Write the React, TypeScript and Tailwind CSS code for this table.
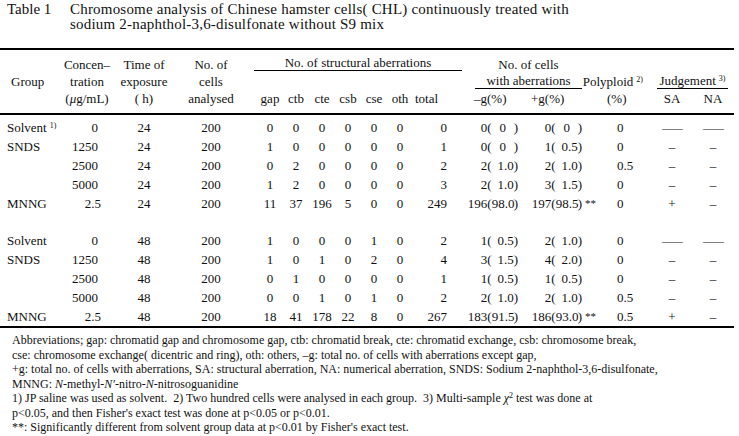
import React from "react";

// shared column template for header and body rows
const COLS =
  "grid grid-cols-[64px_46px_68px_66px_13px_26px_26px_26px_26px_26px_26px_40px_10px_68px_75px_45px_42px_40px]";

interface RowData {
  group?: string;
  sup?: string;
  conc: string;
  concPr?: string;
  time: string;
  cells: string;
  s: (number | string)[];
  neg: [string, string];
  pos: [string, string];
  mark?: string;
  poly: string;
  sa: string;
  na: string;
}

const rows24: RowData[] = [
  { group: "Solvent", sup: "1)", conc: "0", time: "24", cells: "200", s: [0, 0, 0, 0, 0, 0, 0], neg: ["0", "0"], pos: ["0", "0"], poly: "0", sa: "—", na: "—" },
  { group: "SNDS", conc: "1250", time: "24", cells: "200", s: [1, 0, 0, 0, 0, 0, 1], neg: ["0", "0"], pos: ["1", "0.5"], poly: "0", sa: "–", na: "–" },
  { conc: "2500", time: "24", cells: "200", s: [0, 2, 0, 0, 0, 0, 2], neg: ["2", "1.0"], pos: ["2", "1.0"], poly: "0.5", sa: "–", na: "–" },
  { conc: "5000", time: "24", cells: "200", s: [1, 2, 0, 0, 0, 0, 3], neg: ["2", "1.0"], pos: ["3", "1.5"], poly: "0", sa: "–", na: "–" },
  { group: "MNNG", conc: "2.5", concPr: "pr-[9px]", time: "24", cells: "200", s: [11, 37, 196, 5, 0, 0, 249], neg: ["196", "98.0"], pos: ["197", "98.5"], mark: "**", poly: "0", sa: "+", na: "–" },
];

const rows48: RowData[] = [
  { group: "Solvent", conc: "0", time: "48", cells: "200", s: [1, 0, 0, 0, 1, 0, 2], neg: ["1", "0.5"], pos: ["2", "1.0"], poly: "0", sa: "—", na: "—" },
  { group: "SNDS", conc: "1250", time: "48", cells: "200", s: [1, 0, 1, 0, 2, 0, 4], neg: ["3", "1.5"], pos: ["4", "2.0"], poly: "0", sa: "–", na: "–" },
  { conc: "2500", time: "48", cells: "200", s: [0, 1, 0, 0, 0, 0, 1], neg: ["1", "0.5"], pos: ["1", "0.5"], poly: "0", sa: "–", na: "–" },
  { conc: "5000", time: "48", cells: "200", s: [0, 0, 1, 0, 1, 0, 2], neg: ["2", "1.0"], pos: ["2", "1.0"], poly: "0.5", sa: "–", na: "–" },
  { group: "MNNG", conc: "2.5", concPr: "pr-[9px]", time: "48", cells: "200", s: [18, 41, 178, 22, 8, 0, 267], neg: ["183", "91.5"], pos: ["186", "93.0"], mark: "**", poly: "0.5", sa: "+", na: "–" },
];

const Pct = ({ n, p }: { n: string; p: string }) => (
  <span className="whitespace-nowrap">
    {n}(
    <span className={`inline-block w-[22px] ${p === "0" ? "text-center" : "text-right"}`}>{p}</span>)
  </span>
);

const Dash = ({ v }: { v: string }) =>
  v === "—" ? <span className="inline-block scale-x-[1.6]">—</span> : <span>{v}</span>;

const Row = ({ r }: { r: RowData }) => (
  <div className={`${COLS} h-[19px] leading-[19px]`}>
    <div className="pl-[7px] whitespace-nowrap">
      {r.group}
      {r.sup && <sup className="ml-[3px] text-[8px]">{r.sup}</sup>}
    </div>
    <div className={`text-right ${r.concPr ?? "pr-[12px]"}`}>{r.conc}</div>
    <div className="text-center">{r.time}</div>
    <div className="text-center">{r.cells}</div>
    <div />
    {r.s.slice(0, 6).map((v, i) => (
      <div key={i} className="text-center">
        {v}
      </div>
    ))}
    <div className="text-right pr-[6px]">{r.s[6]}</div>
    <div />
    <div className="text-right pr-[13px]">
      <Pct n={r.neg[0]} p={r.neg[1]} />
    </div>
    <div className="flex justify-end pr-[6px]">
      <Pct n={r.pos[0]} p={r.pos[1]} />
      <span className="w-[18px] pl-[3px] text-[11px]">{r.mark}</span>
    </div>
    <div className="pl-[11px]">{r.poly}</div>
    <div className="text-center">
      <Dash v={r.sa} />
    </div>
    <div className="text-center">
      <Dash v={r.na} />
    </div>
  </div>
);

const C = ({ className, children }: { className: string; children: React.ReactNode }) => (
  <div className={`flex justify-center whitespace-nowrap ${className}`}>
    <span>{children}</span>
  </div>
);

export default function App() {
  return (
    <div className="w-[739px] h-[436px] bg-white text-[#111] font-['Liberation_Serif',serif] overflow-hidden">
      {/* title */}
      <div className="flex pt-[2px] text-[15px] leading-[15px] tracking-[0.2px]">
        <div className="w-[70px] pl-[7px] shrink-0 tracking-normal">Table 1</div>
        <div>
          <div>Chromosome analysis of Chinese hamster cells( CHL) continuously treated with</div>
          <div>sodium 2-naphthol-3,6-disulfonate without S9 mix</div>
        </div>
      </div>

      <div className="w-[734px] mt-[16px] border-t-[2px] border-black text-[13px]">
        {/* header */}
        <div className={`${COLS} grid-rows-[17px_17px_17px] pt-[6px] pb-[6px] leading-[17px]`}>
          <C className="col-start-2 row-start-1">Concen–</C>
          <C className="col-start-3 row-start-1">Time of</C>
          <C className="col-start-4 row-start-1">No. of</C>
          <div className="col-start-5 col-span-9 row-start-1 self-start ml-[10px] mr-[1px] text-center leading-[14px] border-b border-black">
            No. of structural aberrations
          </div>
          <div className="col-start-14 col-span-2 row-start-1 ml-[12px] mr-[24px] text-center">No. of cells</div>

          <div className="col-start-1 row-start-2 pl-[11px]">Group</div>
          <C className="col-start-2 row-start-2">tration</C>
          <C className="col-start-3 row-start-2">exposure</C>
          <C className="col-start-4 row-start-2">cells</C>
          <div className="col-start-14 col-span-2 row-start-2 self-start mt-[1px] ml-[12px] mr-[24px] text-center leading-[14px] border-b border-black">
            with aberrations
          </div>
          <div className="col-start-16 row-start-2 flex justify-end pr-[8px] whitespace-nowrap">
            <span>
              Polyploid<sup className="ml-[3px] text-[8px]">2)</sup>
            </span>
          </div>
          <div className="col-start-17 col-span-2 row-start-2 self-start mt-[1px] ml-[6px] mr-[5px] text-center leading-[14px] border-b border-black whitespace-nowrap">
            Judgement<sup className="ml-[3px] text-[8px]">3)</sup>
          </div>

          <C className="col-start-2 row-start-3">
            (<i>μ</i>g/mL)
          </C>
          <C className="col-start-3 row-start-3">( h)</C>
          <C className="col-start-4 row-start-3">analysed</C>
          <C className="col-start-6 row-start-3">gap</C>
          <C className="col-start-7 row-start-3">ctb</C>
          <C className="col-start-8 row-start-3">cte</C>
          <C className="col-start-9 row-start-3">csb</C>
          <C className="col-start-10 row-start-3">cse</C>
          <C className="col-start-11 row-start-3">oth</C>
          <div className="col-start-12 row-start-3 pl-[2px]">total</div>
          <div className="col-start-14 row-start-3 pl-[11px]">–g(%)</div>
          <div className="col-start-15 row-start-3">+g(%)</div>
          <div className="col-start-16 row-start-3 pl-[1px]">(%)</div>
          <C className="col-start-17 row-start-3">SA</C>
          <C className="col-start-18 row-start-3">NA</C>
        </div>

        {/* body */}
        <div className="border-t-[2px] border-b-[2px] border-black pt-[3px]">
          {rows24.map((r, i) => (
            <Row key={i} r={r} />
          ))}
          <div className="h-[18px]" />
          {rows48.map((r, i) => (
            <Row key={i} r={r} />
          ))}
        </div>

        {/* footnotes */}
        <div className="pt-[5px] pl-[12px] text-[12px] leading-[14.5px] whitespace-nowrap">
          <div>
            Abbreviations; gap: chromatid gap and chromosome gap, ctb: chromatid break, cte: chromatid exchange, csb: chromosome break,
          </div>
          <div>cse: chromosome exchange( dicentric and ring), oth: others, –g: total no. of cells with aberrations except gap,</div>
          <div>
            +g: total no. of cells with aberrations, SA: structural aberration, NA: numerical aberration, SNDS: Sodium 2-naphthol-3,6-disulfonate,
          </div>
          <div>
            MNNG: <i>N</i>-methyl-<i>N′</i>-nitro-<i>N</i>-nitrosoguanidine
          </div>
          <div>
            1) JP saline was used as solvent.&nbsp; 2) Two hundred cells were analysed in each group.&nbsp; 3) Multi-sample{" "}
            <i>χ</i>
            <sup className="text-[8px]">2</sup> test was done at
          </div>
          <div>p&lt;0.05, and then Fisher's exact test was done at p&lt;0.05 or p&lt;0.01.</div>
          <div>**: Significantly different from solvent group data at p&lt;0.01 by Fisher's exact test.</div>
        </div>
      </div>
    </div>
  );
}
